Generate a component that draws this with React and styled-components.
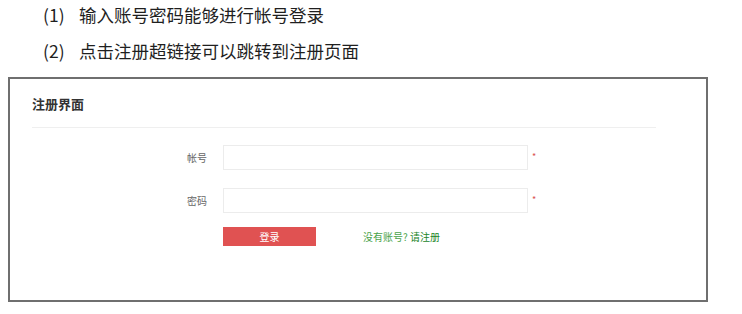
import React from "react";
import styled, { createGlobalStyle } from "styled-components";

const Global = createGlobalStyle`
  html, body { margin: 0; padding: 0; background: #ffffff; }
  body { font-family: "Noto Sans CJK SC", "Noto Sans", sans-serif; }
  * { box-sizing: border-box; }
`;

const Page = styled.div`
  width: 742px;
  height: 314px;
  overflow: hidden;
  background: #fff;
`;

const Steps = styled.ol`
  list-style: none;
  margin: 0;
  padding: 0 0 0 43px;
  display: flex;
  flex-direction: column;
  gap: 8px;
`;

const Step = styled.li`
  display: flex;
  align-items: center;
  height: 28px;
  font-size: 17.5px;
  color: #1f1f1f;
`;

const StepNo = styled.span`
  width: 36px;
  flex: none;
`;

const Card = styled.section`
  margin: 13px 0 0 8px;
  width: 700px;
  height: 225px;
  border: 2px solid #6f6f6f;
  padding: 0 50px 0 22px;
`;

const Header = styled.div`
  padding: 15px 0 13px;
  border-bottom: 1px solid #efefef;
`;

const Title = styled.h2`
  margin: 0;
  font-size: 13px;
  line-height: 20px;
  font-weight: 700;
  color: #333;
`;

const Form = styled.form`
  margin-top: 17px;
  display: flex;
  flex-direction: column;
  gap: 18px;
`;

const Row = styled.div`
  display: flex;
  align-items: center;
  height: 25px;
`;

const Label = styled.label`
  width: 175px;
  text-align: right;
  margin-right: 16px;
  font-size: 10px;
  color: #666;
`;

const Input = styled.input`
  width: 305px;
  height: 25px;
  border: 1px solid #ececec;
  background: #fff;
  outline: none;
  padding: 0 6px;
`;

const Required = styled.span`
  margin-left: 4px;
  color: #d9534f;
  font-size: 9px;
  line-height: 1;
  transform: translateY(-1px);
`;

const Actions = styled.div`
  display: flex;
  align-items: center;
  margin-top: -4px;
  padding-left: 191px;
`;

const Button = styled.button`
  width: 93px;
  height: 19px;
  border: none;
  background: #e05252;
  color: #fff;
  font-family: inherit;
  font-size: 10px;
  padding: 0;
`;

const Hint = styled.span`
  margin-left: 47px;
  font-size: 10px;
  color: #4aa34a;
`;

const RegisterLink = styled.a`
  color: #23862a;
  text-decoration: none;
`;

export default function App() {
  return (
    <Page>
      <Global />
      <Steps>
        <Step>
          <StepNo>(1)</StepNo>输入账号密码能够进行帐号登录
        </Step>
        <Step>
          <StepNo>(2)</StepNo>点击注册超链接可以跳转到注册页面
        </Step>
      </Steps>
      <Card>
        <Header>
          <Title>注册界面</Title>
        </Header>
        <Form onSubmit={(e) => e.preventDefault()}>
          <Row>
            <Label>帐号</Label>
            <Input type="text" />
            <Required>*</Required>
          </Row>
          <Row>
            <Label>密码</Label>
            <Input type="password" />
            <Required>*</Required>
          </Row>
          <Actions>
            <Button type="submit">登录</Button>
            <Hint>
              没有账号? <RegisterLink href="#">请注册</RegisterLink>
            </Hint>
          </Actions>
        </Form>
      </Card>
    </Page>
  );
}
